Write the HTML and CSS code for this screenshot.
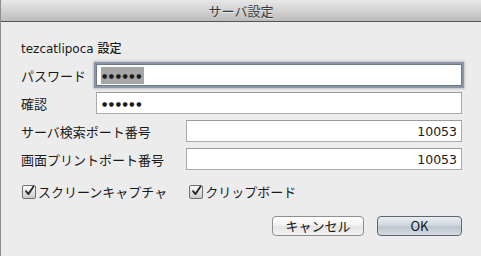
FILE: index.html
```html
<!DOCTYPE html>
<html lang="ja">
<head>
  <meta charset="UTF-8">
  <title>サーバ設定</title>
  <link rel="stylesheet" href="styles.css">
</head>
<body>
  <div class="window">
    <div class="titlebar">サーバ設定</div>

    <div class="content">
      <div class="heading">tezcatlipoca 設定</div>

      <div class="fields">
        <div class="row">
          <span class="label short">パスワード</span>
          <div class="field focused"><span class="dots selected">●●●●●●</span></div>
        </div>
        <div class="row">
          <span class="label short">確認</span>
          <div class="field"><span class="dots">●●●●●●</span></div>
        </div>
        <div class="row">
          <span class="label long">サーバ検索ポート番号</span>
          <div class="field number">10053</div>
        </div>
        <div class="row">
          <span class="label long">画面プリントポート番号</span>
          <div class="field number">10053</div>
        </div>
      </div>

      <div class="checks">
        <label class="check">
          <span class="box">
            <svg width="12" height="12" viewBox="0 0 12 12"><path d="M2.2 6.2 L4.8 9.4 L10.4 1.2" fill="none" stroke="#262626" stroke-width="2" stroke-linecap="round" stroke-linejoin="round"/></svg>
          </span>
          スクリーンキャプチャ
        </label>
        <label class="check">
          <span class="box">
            <svg width="12" height="12" viewBox="0 0 12 12"><path d="M2.2 6.2 L4.8 9.4 L10.4 1.2" fill="none" stroke="#262626" stroke-width="2" stroke-linecap="round" stroke-linejoin="round"/></svg>
          </span>
          クリップボード
        </label>
      </div>

      <div class="buttons">
        <button class="btn cancel">キャンセル</button>
        <button class="btn ok">OK</button>
      </div>
    </div>
  </div>
</body>
</html>
```

FILE: styles.css
```css
body {
  margin: 0;
  font-family: "DejaVu Sans", "Noto Sans CJK JP", sans-serif;
  color: #1a1a1a;
}

.window {
  width: 481px;
  height: 256px;
  box-sizing: border-box;
  background: #ececec;
  border-left: 1px solid #8e8e8e;
  overflow: hidden;
}

.titlebar {
  height: 21px;
  line-height: 22px;
  border-bottom: 1px solid #555;
  background: linear-gradient(#e8e8e8, #bcbcbc);
  text-align: center;
  font-family: "Noto Sans CJK JP", sans-serif;
  font-size: 13px;
  color: #3a3a3a;
  text-shadow: 0 1px 0 rgba(255, 255, 255, 0.5);
}

.content {
  padding: 18px 19px 0 20px;
}

.heading {
  font-size: 12px;
  line-height: 18px;
  font-weight: 500;
}

.fields {
  display: flex;
  flex-direction: column;
  gap: 6px;
  margin-top: 6px;
}

.row {
  display: flex;
  align-items: center;
}

.label {
  font-family: "Noto Sans CJK JP", sans-serif;
  font-size: 13px;
  flex: none;
}

.label.short {
  width: 75px;
}

.label.long {
  width: 165px;
}

.field {
  flex: 1;
  height: 22px;
  box-sizing: border-box;
  background: #fff;
  border: 1px solid #ababab;
  border-top-color: #9a9a9a;
  display: flex;
  align-items: center;
  padding: 0 4px;
  font-size: 12.5px;
}

.field.focused {
  border-color: #6d7885;
  box-shadow: 0 0 0 2px #8a96a3, 0 0 2px 3px rgba(120, 134, 148, 0.4);
}

.field.number {
  justify-content: flex-end;
}

.dots {
  font-size: 6px;
  letter-spacing: 1.6px;
  line-height: 17px;
  padding: 0 1px;
}

.dots.selected {
  background: #a6a6a6;
}

.checks {
  display: flex;
  gap: 22px;
  margin-top: 14px;
  padding-left: 1px;
}

.check {
  display: flex;
  align-items: center;
  gap: 2px;
  font-family: "Noto Sans CJK JP", sans-serif;
  font-size: 13px;
  line-height: 16px;
}

.box {
  width: 14px;
  height: 14px;
  box-sizing: border-box;
  border: 1px solid #6f6f6f;
  border-radius: 2px;
  background: linear-gradient(#fdfdfd, #c9c9c9);
  display: flex;
  align-items: center;
  justify-content: center;
}

.box svg {
  margin-top: -2px;
  margin-left: 1px;
}

.buttons {
  display: flex;
  justify-content: flex-end;
  gap: 13px;
  margin-top: 16px;
}

.btn {
  height: 20px;
  padding: 0;
  border-radius: 4px;
  font-family: "Noto Sans CJK JP", sans-serif;
  font-size: 13px;
  line-height: 18px;
  color: #111;
}

.cancel {
  width: 92px;
  border: 1px solid #8f8f8f;
  background: linear-gradient(#ffffff, #f0f0f0 50%, #e4e4e4 51%, #f3f3f3);
}

.ok {
  width: 85px;
  border: 1px solid #5e6670;
  background: linear-gradient(#e9edf1, #cdd5dd 50%, #bcc6d0 51%, #d3dae2);
}
```
